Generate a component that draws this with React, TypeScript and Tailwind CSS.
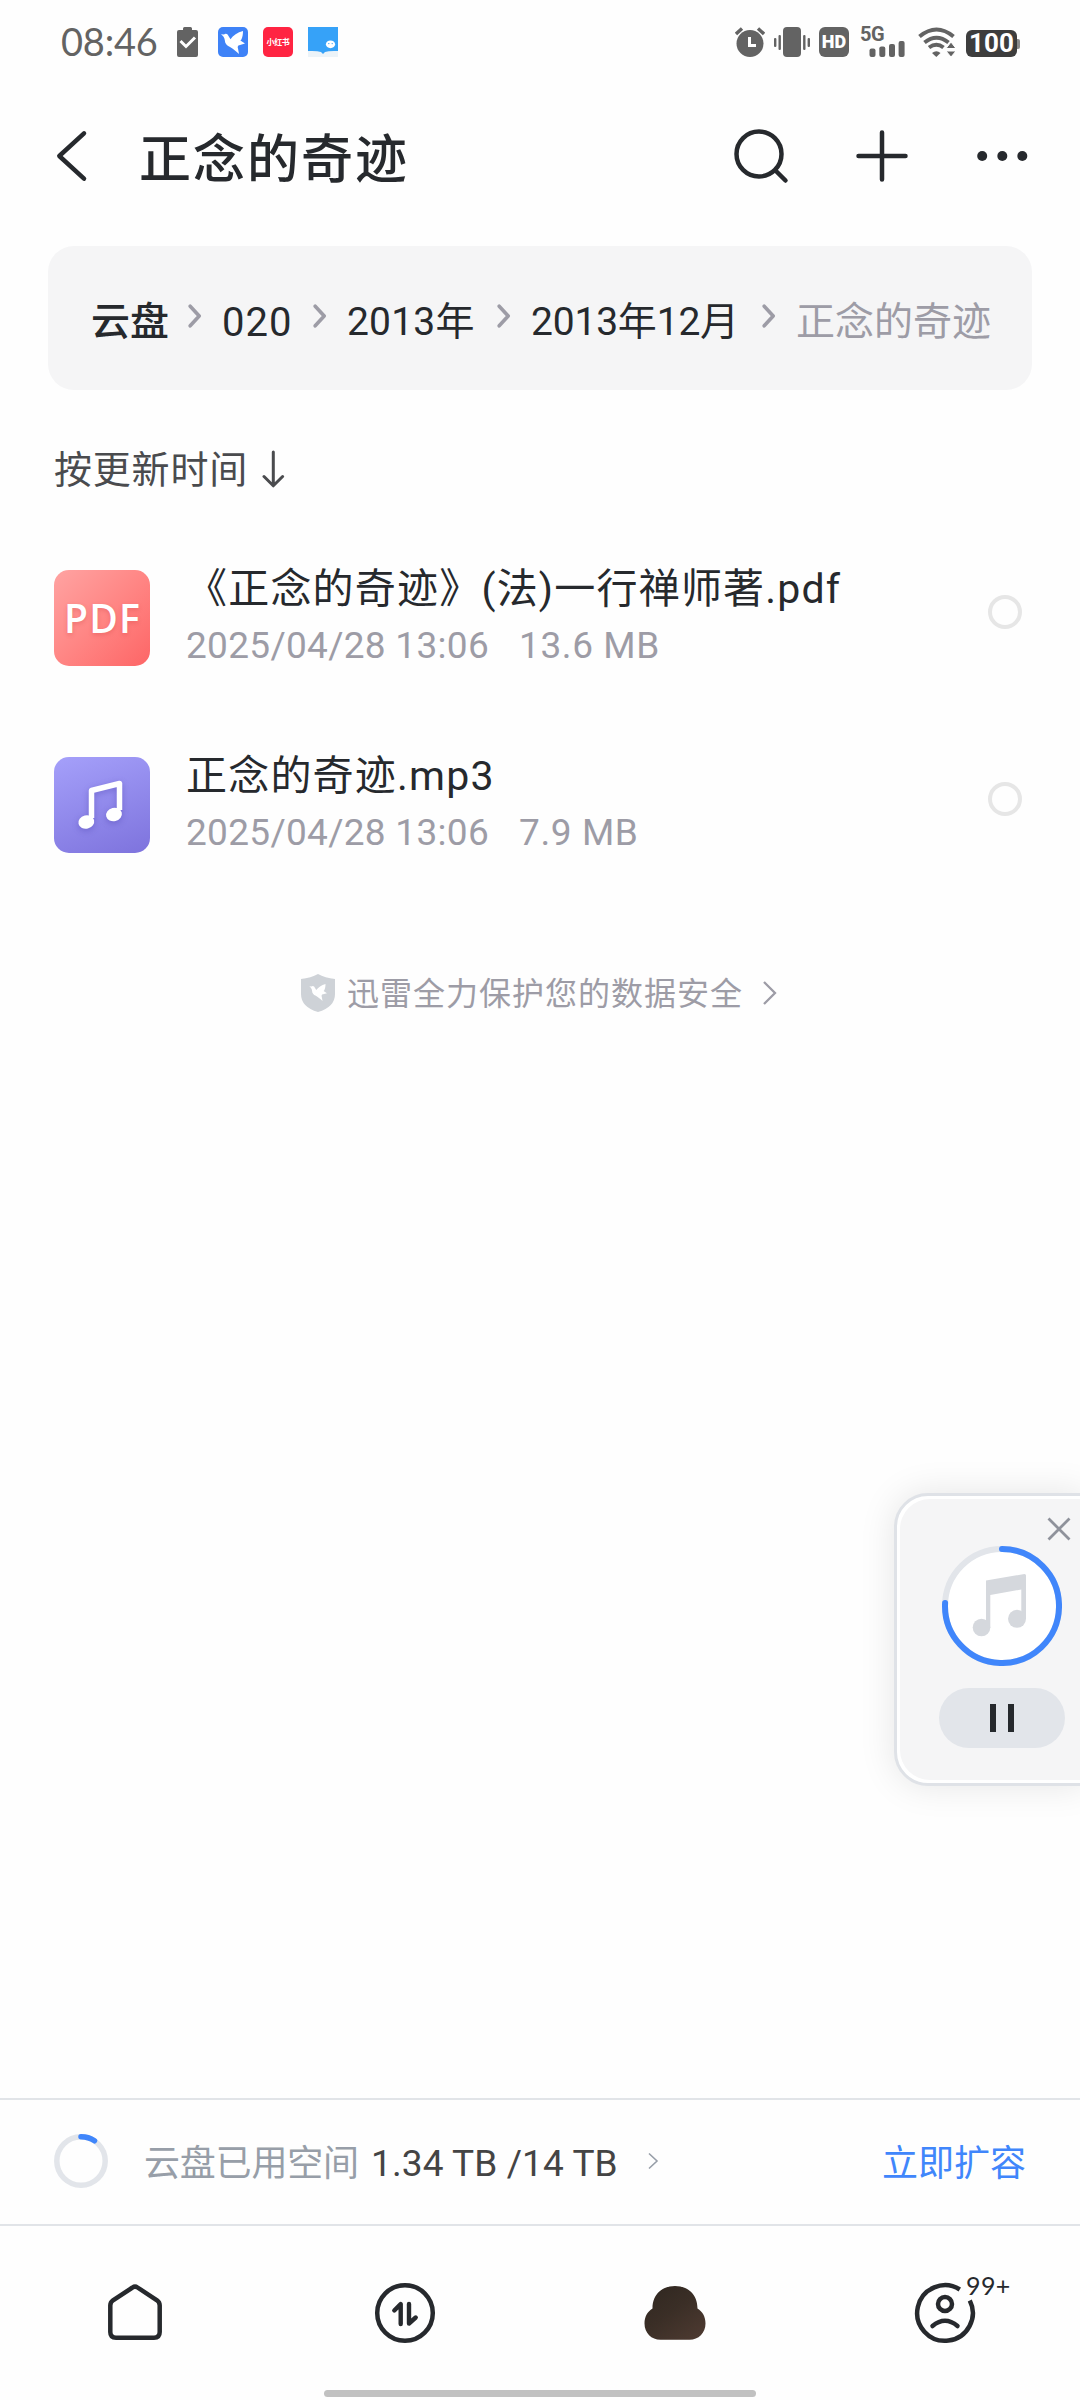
import { ReactNode } from 'react';

type FileItem = {
    id: string;
    kind: 'pdf' | 'audio';
    name: string;
    date: string;
    size: string;
};

const files: FileItem[] = [
    { id: '1', kind: 'pdf', name: '《正念的奇迹》(法)一行禅师著.pdf', date: '2025/04/28 13:06', size: '13.6 MB' },
    { id: '2', kind: 'audio', name: '正念的奇迹.mp3', date: '2025/04/28 13:06', size: '7.9 MB' },
];

const BIRD = 'M3 7.2 6 7.6C7 6.6 8.6 6.6 9.6 7.6L12.5 12.2C15 8.6 19.5 5.4 25 4 25 7 24.6 10 23.4 12.4L22.4 13.6 27 16.6 20.4 18.4C19.6 19.4 19.6 20.4 20 21.6L21 27C18 24.4 15.4 22 12 20 8.6 18.6 7 16.4 6.8 13.2 6.6 10.6 5 8.6 3 7.2Z';

function StatusBar() {
    return (
        <div className="flex h-[84px] items-start pl-[61px] pt-[27px]">
            <span className="mt-[-5px] w-[116px] font-['Lato',sans-serif] text-[38px] leading-[38px] tracking-[-0.2px] text-[#636363]">08:46</span>
            <svg className="h-[30px] w-[21px]" viewBox="0 0 21 30" fill="none">
                <path d="M0 5Q0 3 2 3H6V1.5Q6 0 7.5 0H13.5Q15 0 15 1.5V3H19Q21 3 21 5V28Q21 30 19 30H2Q0 30 0 28Z" fill="#636363" />
                <path d="m3.5 14 5.5 5.5L18 10.5" stroke="#fff" strokeWidth="3" />
            </svg>
            <svg className="ml-5 h-[30px] w-[30px]" viewBox="0 0 30 30">
                <rect width="30" height="30" rx="5" fill="#3e82f7" />
                <path d={BIRD} fill="#fff" />
            </svg>
            <div className="ml-[15px] flex h-[30px] w-[30px] items-center justify-center rounded-[5px] bg-[#ff2442]">
                <span className="whitespace-nowrap font-['Noto_Sans_CJK_SC',sans-serif] text-[8px] font-bold leading-[10px] tracking-[-0.3px] text-white">小红书</span>
            </div>
            <svg className="ml-[15px] h-[30px] w-[30px]" viewBox="0 0 30 30">
                <rect width="30" height="30" fill="#ecf3f8" />
                <path d="M0 0H30V24Q21 23.5 17 25L15 27 13 25Q9 23.5 0 24Z" fill="#36a2f8" />
                <ellipse cx="22.5" cy="17.3" rx="4.6" ry="3.9" fill="#fff" />
                <circle cx="20.8" cy="16.6" r=".7" fill="#36a2f8" />
                <circle cx="24.2" cy="16.6" r=".7" fill="#36a2f8" />
            </svg>

            <svg className="ml-[397px] h-[30px] w-[30px]" viewBox="0 0 30 30" fill="none">
                <circle cx="15" cy="16.5" r="13.5" fill="#636363" />
                <path d="M1 7 7 1.5M29 7 23 1.5" stroke="#636363" strokeWidth="3.4" />
                <path d="M14.5 10v8.5H21" stroke="#fff" strokeWidth="3" />
            </svg>
            <svg className="ml-[9px] h-[30px] w-[36px]" viewBox="0 0 36 30" fill="#636363">
                <rect x="9" width="18" height="30" rx="4" />
                <rect x="4.5" y="8" width="2.4" height="15" rx="1" />
                <rect x="0" y="11" width="2.4" height="9" rx="1" />
                <rect x="29.1" y="8" width="2.4" height="15" rx="1" />
                <rect x="33.6" y="11" width="2.4" height="9" rx="1" />
            </svg>
            <div className="ml-[9px] flex h-[30px] w-[30px] items-center justify-center rounded-[6px] bg-[#636363]">
                <span className="font-['Roboto',sans-serif] text-[18px] font-black leading-[20px] text-white">HD</span>
            </div>
            <div className="relative ml-[11px] h-[30px] w-[45px]">
                <span className="absolute left-0 top-[-2px] font-['Roboto',sans-serif] text-[20px] font-bold leading-[18px] tracking-[-0.5px] text-[#636363]">5G</span>
                <svg className="h-[30px] w-[45px]" viewBox="0 0 45 30" fill="#636363">
                    <rect x="9.5" y="21.5" width="6" height="8.5" rx="2" />
                    <rect x="19.3" y="19.5" width="6" height="10.5" rx="2" />
                    <rect x="29" y="17" width="6" height="13" rx="2" />
                    <rect x="38.6" y="14" width="6" height="16" rx="2" />
                </svg>
            </div>
            <svg className="ml-[13px] h-[30px] w-[37px]" viewBox="0 0 37 30" fill="none">
                <path d="M1.5 9.5Q18.5 -4.5 35.5 9.5M6.5 15.5Q18.5 6 30.5 15.5M11 20.5Q18.5 15 25.5 20.5" stroke="#636363" strokeWidth="4" />
                <path d="M14 26Q18.5 22.5 22.5 26L18.3 30Z" fill="#636363" />
                <path d="M33 15 38 21.500H28ZM33 30 28 24H38Z" fill="#636363" stroke="#fff" strokeWidth="1" />
            </svg>
            <div className="ml-[11px] mt-[3px] flex h-[27px] items-center">
                <div className="flex h-[27px] w-[51px] items-center justify-center rounded-[6px] bg-[#3d3d3d]">
                    <span className="font-['Roboto',sans-serif] text-[26px] font-bold leading-[27px] text-white">100</span>
                </div>
                <div className="h-2.5 w-[3px] rounded-r-[2px] bg-[#8a8a8a]" />
            </div>
        </div>
    );
}

function Header() {
    return (
        <header className="flex h-[144px] items-center pl-[51px]">
            <svg className="h-[60px] w-[40px]" viewBox="0 0 40 60" fill="none">
                <path d="M33 7.300 8.300 30 33 52.700" stroke="#26292d" strokeWidth="4.500" strokeLinecap="round" strokeLinejoin="round" />
            </svg>
            <h1 className="ml-[48px] mt-[10px] w-[580px] text-[52px] font-medium leading-[60px] tracking-[2px] text-[#26292d]">正念的奇迹</h1>
            <svg className="h-[60px] w-[320px]" viewBox="719 126 320 60" fill="none" stroke="#26292d" strokeWidth="4.500" strokeLinecap="round">
                <circle cx="759" cy="154" r="22.500" />
                <path d="m775.500 170.500 10 10M858.500 156h47M882 132.500v47" />
                <g fill="#26292d" stroke="none">
                    <circle cx="982.200" cy="156" r="5" />
                    <circle cx="1002.300" cy="156" r="5" />
                    <circle cx="1022.300" cy="156" r="5" />
                </g>
            </svg>
        </header>
    );
}

function CrumbChevron() {
    return (
        <svg className="mt-[-10px] h-[24px] w-[14px] shrink-0" viewBox="0 0 14 24" fill="none">
            <path d="m2.200 2.200 9 9.800-9 9.800" stroke="#9d9ca6" strokeWidth="3.600" strokeLinecap="round" strokeLinejoin="round" />
        </svg>
    );
}

function Breadcrumb() {
    return (
        <nav className="ml-[48px] flex h-[144px] w-[984px] items-center rounded-[26px] bg-[#f5f5f6] pl-[43px] pt-[6px] text-[39px] text-[#26292d]">
            <span className="mt-[3px] w-[97px] font-medium">云盘</span>
            <CrumbChevron />
            <span className="ml-[20px] mt-[3px] w-[91px] text-[40px] tracking-[1px]">020</span>
            <CrumbChevron />
            <span className="ml-[20px] mt-[3px] w-[150px] whitespace-nowrap tracking-[0.2px]">2013年</span>
            <CrumbChevron />
            <span className="ml-[20px] mt-[3px] w-[231px] whitespace-nowrap tracking-[-0.2px]">2013年12月</span>
            <CrumbChevron />
            <span className="ml-[20px] mt-[3px] whitespace-nowrap text-[#9d9ca6]">正念的奇迹</span>
        </nav>
    );
}

const NOTE = (
    <>
        <path d="M37.500 61V33.500L65.500 26.500V53" stroke="#fff" strokeWidth="5.500" strokeLinejoin="round" />
        <ellipse cx="32.300" cy="65" rx="8" ry="6.600" fill="#fff" transform="rotate(-14 32.300 65)" />
        <ellipse cx="60" cy="57.500" rx="8" ry="6.600" fill="#fff" transform="rotate(-14 60 57.500)" />
    </>
);

function FileIcon({ kind }: { kind: FileItem['kind'] }) {
    if (kind === 'pdf') {
        return (
            <div className="flex h-[96px] w-[96px] items-center justify-center rounded-[15px] bg-linear-to-br from-[#ffa3a2] to-[#fd6566]">
                <span className="ml-px font-['Open_Sans',sans-serif] text-[39px] font-semibold leading-[40px] tracking-[1.2px] text-white [text-shadow:0_2px_4px_rgba(200,60,60,0.3)]">PDF</span>
            </div>
        );
    }
    return (
        <div className="h-[96px] w-[96px] rounded-[15px] bg-linear-160 from-[#a5a0fa] to-[#7e73dd]">
            <svg className="h-[96px] w-[96px] drop-shadow-[0_2px_3px_rgba(70,60,170,0.4)]" viewBox="0 0 96 96" fill="none">{NOTE}</svg>
        </div>
    );
}

function FileRow({ file }: { file: FileItem }) {
    return (
        <li className="flex h-[187px] items-start pl-[54px]">
            <div className="mt-[22px]"><FileIcon kind={file.kind} /></div>
            <div className="ml-[36px] w-[802px]">
                <p className="mt-[11px] whitespace-nowrap text-[41px] leading-[60px] tracking-[1.2px] text-[#26292d]">{file.name}</p>
                <p className="mt-[4px] flex whitespace-nowrap text-[37px] leading-[46px] text-[#9d9ca6]">
                    <span className="w-[333px] tracking-[0.3px]">{file.date}</span>
                    <span className="tracking-[0.6px]">{file.size}</span>
                </p>
            </div>
            <div className="mt-[47px] h-[34px] w-[34px] rounded-full border-[4px] border-[#e6e6e6]" />
        </li>
    );
}

function Player() {
    return (
        <aside className="absolute left-[894px] top-[1493px] h-[293px] w-[192px] rounded-l-[34px] border-[3px] border-[#dfe2e7] bg-white p-[3px] shadow-[0_0_36px_rgba(0,0,0,0.1)]">
            <div className="flex h-full flex-col rounded-l-[30px] bg-[#f5f5f6] pl-[39px]">
                <svg className="ml-[108px] mt-[18px] h-[24px] w-[24px]" viewBox="0 0 24 24" fill="none">
                    <path d="m1.500 1.500 21 21M22.500 1.500l-21 21" stroke="#8f929b" strokeWidth="2.800" />
                </svg>
                <svg className="ml-[3px] mt-[5px] h-[120px] w-[120px] shrink-0" viewBox="942 1546 120 120" fill="none">
                    <circle cx="1002" cy="1606" r="57" fill="#fff" stroke="#e2e5ea" strokeWidth="6" />
                    <path d="M1002 1549A57 57 0 1 1 945.100 1603" stroke="#4086fb" strokeWidth="6" strokeLinecap="round" />
                    <path d="M986 1580.500 1024.500 1574Q1026 1574 1026 1575.500V1619H1021.300V1589.500L990.300 1595V1628H986Z" fill="#d5d8dd" />
                    <circle cx="981.500" cy="1627.500" r="8.800" fill="#d5d8dd" />
                    <circle cx="1017" cy="1618.800" r="9" fill="#d5d8dd" />
                </svg>
                <button className="mt-[22px] flex h-[60px] w-[126px] items-center justify-center gap-3 rounded-full bg-[#e2e5ea]">
                    <i className="h-[28px] w-[6px] bg-[#26292d]" />
                    <i className="h-[28px] w-[6px] bg-[#26292d]" />
                </button>
            </div>
        </aside>
    );
}

function StorageBar() {
    return (
        <section className="flex h-[128px] items-center border-y-2 border-[#e1e4e8] pl-[54px] text-[36px]">
            <svg className="mt-[-2px] h-[54px] w-[54px]" viewBox="0 0 54 54" fill="none" strokeWidth="5.500">
                <circle cx="27" cy="27" r="24.200" stroke="#e2e5ea" />
                <path d="M27 2.800A24.200 24.200 0 0 1 40.500 6.800" stroke="#4086fb" strokeLinecap="round" />
            </svg>
            <span className="ml-[36px] mt-[3px] w-[227px] whitespace-nowrap tracking-[-0.2px] text-[#979ea8]">云盘已用空间</span>
            <span className="mt-[3px] w-[276px] whitespace-nowrap text-[37px] tracking-[0.1px] text-[#444]">1.34 TB /14 TB</span>
            <svg className="mt-[-2px] h-[18px] w-[13px]" viewBox="0 0 13 18" fill="none">
                <path d="m2 1.500 8 7.500-8 7.500" stroke="#979ea8" strokeWidth="1.600" />
            </svg>
            <span className="ml-[222px] mt-[3px] whitespace-nowrap text-[#4086fb]">立即扩容</span>
        </section>
    );
}

function NavItem({ children }: { children: ReactNode }) {
    return <div className="relative flex flex-1 justify-center">{children}</div>;
}

function TabBar() {
    return (
        <footer className="flex h-[174px] flex-col">
            <div className="flex h-[164px] pt-[53px]">
                <NavItem>
                    <svg className="h-[68px] w-[68px]" viewBox="101 2279 68 68" fill="none">
                        <path d="M132.500 2287.500Q135 2285.800 137.500 2287.500L157 2300.300Q159.700 2302.300 159.700 2305.500V2332Q159.700 2337.700 154 2337.700H116Q110.300 2337.700 110.300 2332V2305.500Q110.300 2302.300 113 2300.300Z" stroke="#26292d" strokeWidth="4.500" />
                    </svg>
                </NavItem>
                <NavItem>
                    <svg className="h-[68px] w-[68px]" viewBox="371 2279 68 68" fill="none" stroke="#26292d" strokeLinecap="round" strokeLinejoin="round">
                        <circle cx="405" cy="2313" r="27.800" strokeWidth="4.500" />
                        <path d="M394.300 2310.500 400.700 2304V2324M409 2304V2323.500L415.700 2317.500" strokeWidth="4.400" />
                    </svg>
                </NavItem>
                <NavItem>
                    <svg className="h-[68px] w-[68px]" viewBox="641.500 2279 68 68">
                        <defs>
                            <linearGradient id="cloud" x1="0" y1="0" x2=".8" y2="1">
                                <stop offset="0" stopColor="#2f2720" />
                                <stop offset=".5" stopColor="#3a2e26" />
                                <stop offset="1" stopColor="#4c3930" />
                            </linearGradient>
                        </defs>
                        <path d="M653 2308.500C653 2294 663 2286 675.500 2286S698 2294 698 2308.500C703 2311.500 706 2316.500 706 2323.500 706 2333 699 2339.800 690 2339.800H661C652 2339.800 645 2333 645 2323.500 645 2316.500 648 2311.500 653 2308.500Z" fill="url(#cloud)" />
                    </svg>
                </NavItem>
                <NavItem>
                    <svg className="h-[68px] w-[68px]" viewBox="911 2279 68 68" fill="none" stroke="#26292d">
                        <path d="M959.800 2289.500A27.800 27.800 0 1 0 969.800 2300.500" strokeWidth="4.500" />
                        <circle cx="945" cy="2304" r="7" strokeWidth="4.500" />
                        <path d="M932.500 2326Q945 2315.500 957.500 2326" strokeWidth="4.500" strokeLinecap="round" />
                    </svg>
                    <span className="absolute left-[156px] top-[-7px] font-['Lato',sans-serif] text-[25px] leading-[26px] tracking-[0.4px] text-[#26292d]">99+</span>
                </NavItem>
            </div>
            <div className="ml-[324px] h-[7px] w-[432px] rounded-full bg-[#c1c1c1]" />
        </footer>
    );
}

export default function App() {
    return (
        <main className="relative flex h-[2400px] w-[1080px] flex-col overflow-hidden bg-[#fefefe] font-['Roboto','Noto_Sans_CJK_SC',sans-serif]">
            <StatusBar />
            <div className="h-[162px]"><Header /></div>
            <Breadcrumb />

            {/* 排序方式 */}
            <div className="flex h-[158px] items-center pl-[54px]">
                <span className="mt-[3px] w-[208px] whitespace-nowrap text-[38px] tracking-[0.8px] text-[#4a4b4e]">按更新时间</span>
                <svg className="h-[38px] w-[24px]" viewBox="0 0 24 38" fill="none">
                    <path d="M11.300 2v33M2 26.500l9.300 9.300 9.300-9.300" stroke="#4a4b4e" strokeWidth="3" strokeLinecap="round" strokeLinejoin="round" />
                </svg>
            </div>

            <ul>
                {files.map((file) => <FileRow key={file.id} file={file} />)}
            </ul>

            <div className="flex h-[144px] items-center pl-[300px]">
                <svg className="mt-[-3px] h-[40px] w-[36px]" viewBox="0 0 36 40">
                    <path d="M18 1Q25 5 35 6V21Q35 34 18 39 1 34 1 21V6Q11 5 18 1Z" fill="#ced2d7" />
                    <path d={BIRD} fill="#fff" transform="translate(7 8) scale(.74)" />
                </svg>
                <span className="ml-[11px] w-[415px] whitespace-nowrap text-[32px] tracking-[1px] text-[#9d9ca6]">迅雷全力保护您的数据安全</span>
                <svg className="mt-[-3px] h-[26px] w-[16px]" viewBox="0 0 16 26" fill="none">
                    <path d="m2 2 11 11L2 24" stroke="#9d9ca6" strokeWidth="2.300" />
                </svg>
            </div>

            <div className="mt-auto">
                <StorageBar />
                <TabBar />
            </div>
            <Player />
        </main>
    );
}
